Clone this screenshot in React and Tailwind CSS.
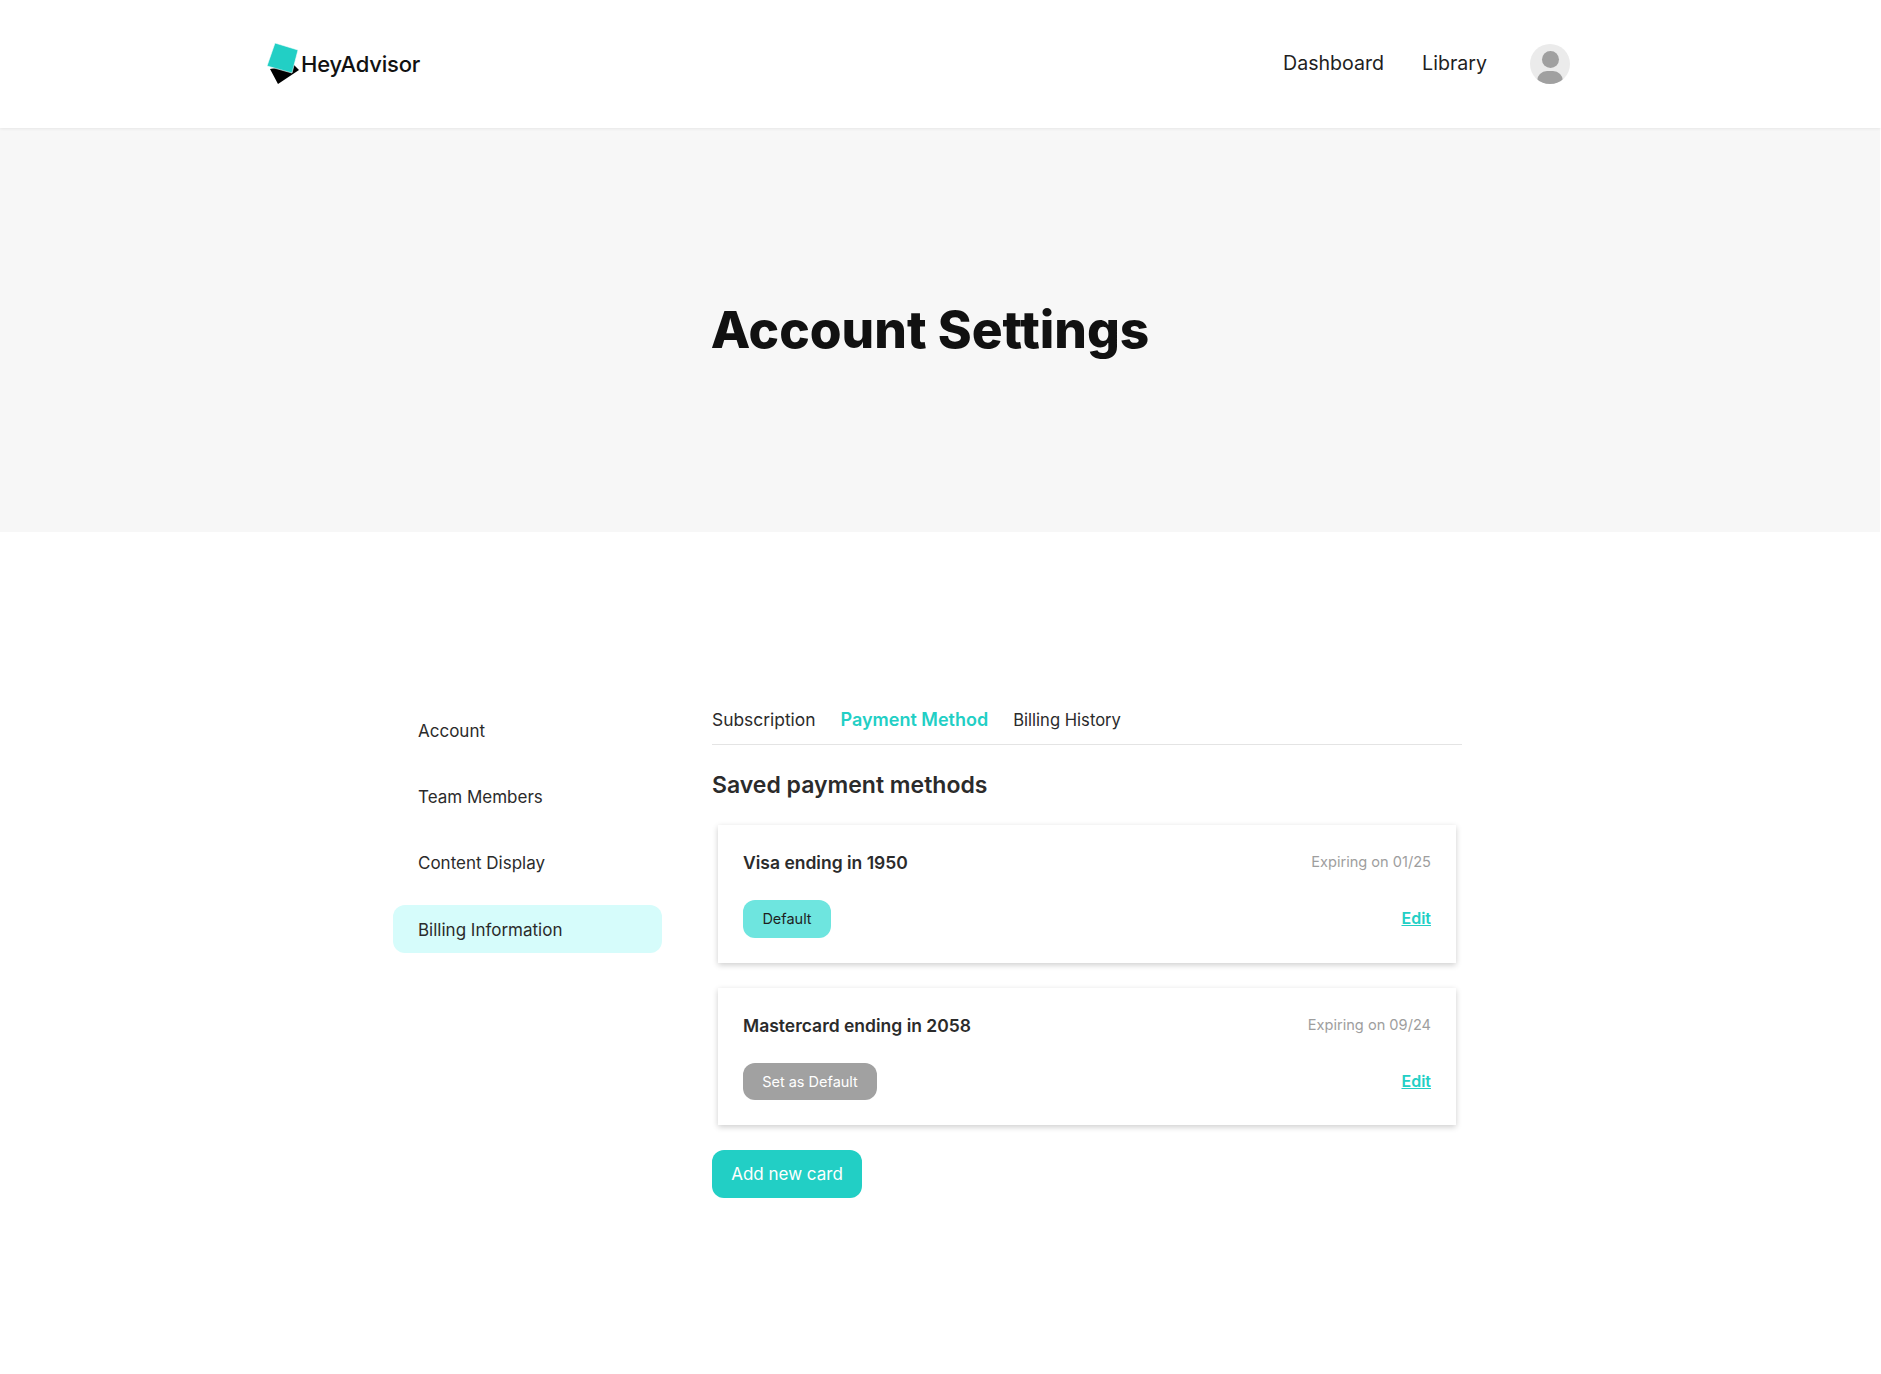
const dm = { fontFamily: '"Inter", "Noto Sans", sans-serif' };

function Logo() {
  return (
    <div className="flex items-center">
      <svg width="34" height="44" viewBox="0 0 34 44" className="shrink-0">
        <path d="M4 27 L12 42 L33 28 L28 23 Z" fill="#000" />
        <path d="M9 1 L32 8 L26 31 L1 24 Z" fill="#22cfc5" stroke="#fff" strokeWidth="0.6" />
      </svg>
      <span className="text-[22px] font-medium text-[#111] tracking-[-0.2px] ml-[1px]">HeyAdvisor</span>
    </div>
  );
}

function PaymentCard({ name, expiry, height, children }) {
  return (
    <div className={`mx-[6px] mb-[25px] ${height} bg-white shadow-[0_2px_6px_rgba(0,0,0,0.2)] px-[25px] pt-[25px]`}>
      <div className="flex justify-between items-center h-[25px]">
        <span className="text-[17.5px] font-semibold text-[#2b2b2b] pt-[1px]">{name}</span>
        <span className="text-[14.6px] text-[#9e9e9e] pt-[1px]">{expiry}</span>
      </div>
      <div className="flex justify-between items-center mt-[25px]">
        {children}
        <a className="text-[16px] font-semibold underline text-[#22cfc5] pb-[2px]">Edit</a>
      </div>
    </div>
  );
}

export default function App() {
  return (
    <div className="min-h-[1374px] bg-white text-[#2b2b2b]" style={dm}>
      <header className="relative h-[128px] flex items-center justify-between pl-[266px] pr-[311px] shadow-[0_1px_3px_rgba(0,0,0,0.07)]">
        <Logo />
        <nav className="flex items-center text-[19.6px] text-[#1f1f1f]">
          <a>Dashboard</a>
          <a className="ml-[38px]">Library</a>
          <div className="ml-[43px] w-[40px] h-[40px] rounded-full bg-[#ebebeb] overflow-hidden relative">
            <div className="absolute left-[12px] top-[7px] w-[17px] h-[17px] rounded-full bg-[#a0a0a0]" />
            <div className="absolute left-[7px] top-[27px] w-[26px] h-[20px] rounded-full bg-[#a0a0a0]" />
          </div>
        </nav>
      </header>

      <section className="h-[404px] mr-[1px] bg-[#f7f7f7] flex items-center justify-center pr-[20px]">
        <h1 className="text-[51.4px] font-extrabold text-[#111]">Account Settings</h1>
      </section>

      <main className="flex pl-[393px] pt-[160px]">
        <aside className="w-[269px] pt-[14px] flex flex-col gap-[18px] text-[17px]">
          <div className="h-[48px] flex items-center px-[25px] pt-[4px]">Account</div>
          <div className="h-[48px] flex items-center px-[25px] pt-[4px]">Team Members</div>
          <div className="h-[48px] flex items-center px-[25px] pt-[4px]">Content Display</div>
          <div className="h-[48px] mt-[1px] flex items-center px-[25px] pt-[3px] bg-[#d6fcfb] rounded-[12px]">Billing Information</div>
        </aside>

        <div className="ml-[50px] w-[750px]">
          <div className="h-[53px] border-b border-[#e4e4e4] flex gap-[25px] items-center pt-[5px]">
            <span className="text-[17.4px]">Subscription</span>
            <span className="text-[18px] font-semibold text-[#22cfc5] pb-[2px]">Payment Method</span>
            <span className="text-[16.6px]">Billing History</span>
          </div>
          <h2 className="mt-[24px] mb-[24px] text-[23px] leading-[32px] font-semibold text-[#2b2b2b]">Saved payment methods</h2>
          <PaymentCard name="Visa ending in 1950" expiry="Expiring on 01/25" height="h-[138px]">
            <button className="h-[38px] w-[88px] rounded-[12px] bg-[#6ee5df] text-[14.5px] text-[#1f1f1f]">Default</button>
          </PaymentCard>
          <PaymentCard name="Mastercard ending in 2058" expiry="Expiring on 09/24" height="h-[137px]">
            <button className="h-[37px] w-[134px] rounded-[12px] bg-[#a1a1a1] text-[14.5px] text-white">Set as Default</button>
          </PaymentCard>
          <button className="h-[48px] w-[150px] rounded-[12px] bg-[#22cfc5] text-white text-[17px] pt-[2px]">Add new card</button>
        </div>
      </main>
    </div>
  );
}
